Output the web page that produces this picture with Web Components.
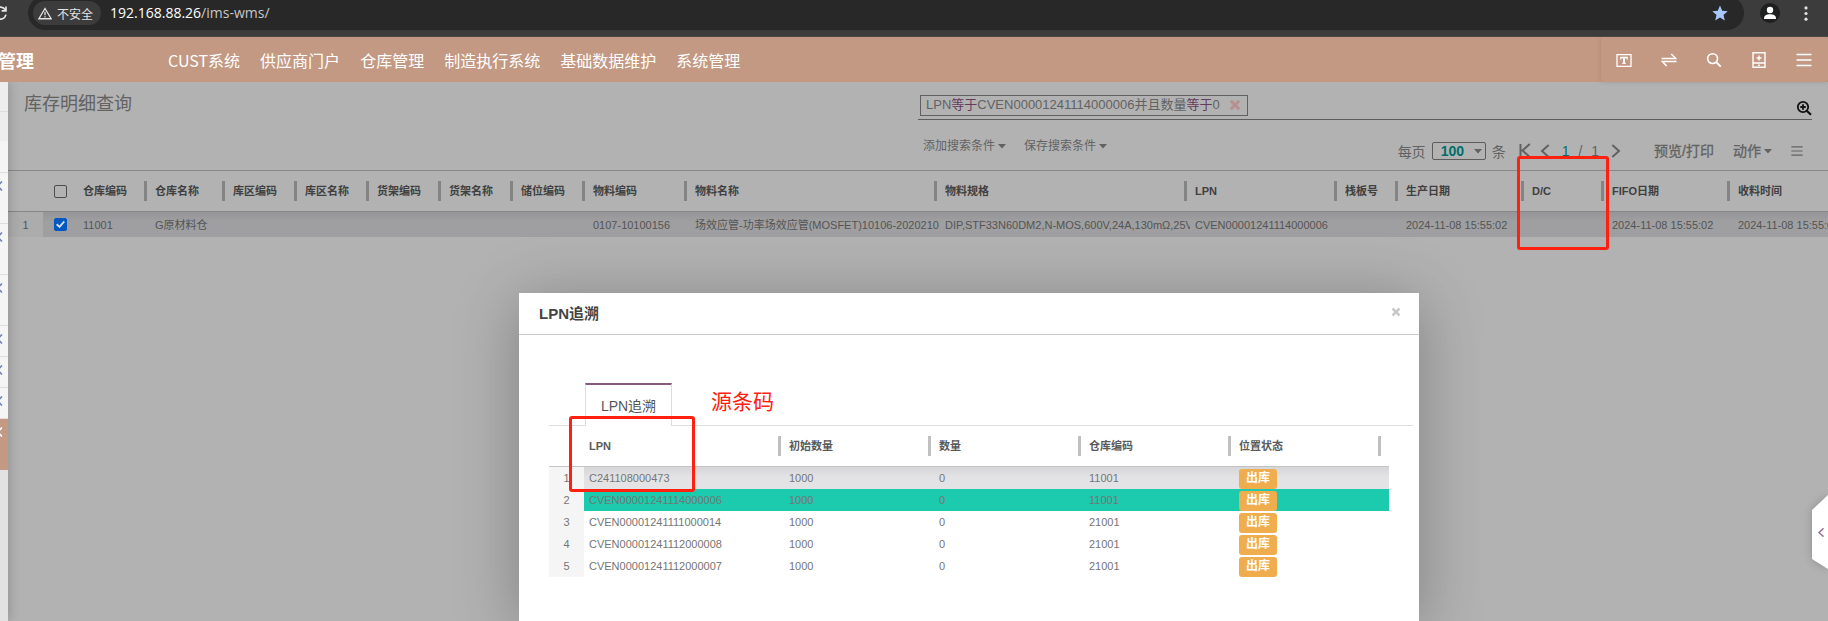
<!DOCTYPE html>
<html lang="zh-CN">
<head>
<meta charset="UTF-8">
<title>库存明细查询</title>
<style>
  body { margin: 0; height: 100vh; overflow: hidden; display: flex; flex-direction: column; background: #b2b2b2; color: #5c5c5c; font-family: "Liberation Sans", "Noto Sans CJK SC", sans-serif; font-size: 14px; }
  main { position: relative; flex: 1; min-height: 0; display: flex; }
  .page { flex: 1; min-width: 0; overflow: hidden; }
</style>
</head>
<body>
  <browser-bar></browser-bar>
  <app-header></app-header>
  <main>
    <side-menu></side-menu>
    <div class="page">
      <control-panel>库存明细查询</control-panel>
      <data-list id="stock" label="库存明细" dim></data-list>
    </div>
    <trace-dialog></trace-dialog>
    <side-handle></side-handle>
  </main>
  <mark-box style="--x:1517px;--y:156px;--w:92px;--h:94px"></mark-box>
  <mark-box style="--x:569px;--y:416px;--w:126px;--h:76px"></mark-box>
  <mark-text style="--x:711px;--y:390px">源条码</mark-text>

<script>
  // Iconos compartidos: [viewBox, contenido]
  const ICONS = {
    reload: ['0 0 16 16', '<path d="M13.4 5.2A6 6 0 1 0 14 9.600M14 1.500v4.300H9.600" fill="none" stroke="currentColor" stroke-width="1.700"/>'],
    warning: ['0 0 16 14', '<path d="M8 1.300 15 13H1z" fill="none" stroke="currentColor" stroke-width="1.500"/><path d="M8 5v4M8 10.200v1.500" stroke="currentColor" stroke-width="1.500"/>'],
    star: ['0 0 16 16', '<path d="M8 .6 10.200 5.700 15.700 6.200 11.500 9.900 12.800 15.400 8 12.500 3.200 15.400 4.500 9.900.3 6.200 5.800 5.700z" fill="currentColor"/>'],
    user: ['0 0 20 20', '<circle cx="10" cy="10" r="10" fill="#1e1f1f"/><circle cx="10" cy="7" r="3.200" fill="#fff"/><path d="M4 15.500c0-3 2.500-4.200 6-4.200s6 1.200 6 4.200V16H4z" fill="#fff"/>'],
    dots: ['0 0 4 16', '<circle cx="2" cy="2" r="1.700" fill="currentColor"/><circle cx="2" cy="8" r="1.700" fill="currentColor"/><circle cx="2" cy="14" r="1.700" fill="currentColor"/>'],
    textbox: ['0 0 16 16', '<path d="M1 2.700h14v11.600H1z" fill="none" stroke="currentColor" stroke-width="1.300"/><path d="M4.800 7.400V5.500h6.400v1.900M6.300 11.400h3.400" fill="none" stroke="currentColor" stroke-width="1.300"/><path d="M8 5.400v6" stroke="currentColor" stroke-width="2"/>'],
    swap: ['0 0 16 16', '<path d="M.5 6.500h14.300L10.300 2M15.500 9.500H1.200L5.700 14" fill="none" stroke="currentColor" stroke-width="1.500"/>'],
    search: ['0 0 16 16', '<circle cx="6.600" cy="6.600" r="4.900" fill="none" stroke="currentColor" stroke-width="1.600"/><path d="m10.200 10.200 4.500 4.500" stroke="currentColor" stroke-width="1.900"/>'],
    device: ['0 0 16 16', '<path d="M2 .7h12v14.600H2zM2 11h12M8 3.500v5M5.500 6h5M7.200 13.200h1.600" fill="none" stroke="currentColor" stroke-width="1.400"/>'],
    menu: ['0 0 16 16', '<path d="M.5 2.500h15M.5 8h15M.5 13.500h15" stroke="currentColor" stroke-width="1.500"/>'],
    zoomIn: ['0 0 16 16', '<circle cx="7" cy="7" r="5.200" fill="none" stroke="currentColor" stroke-width="1.800"/><path d="m10.700 10.700 4.300 4" stroke="currentColor" stroke-width="2.200"/><path d="M7 4.300v5.400M4.300 7h5.400" stroke="currentColor" stroke-width="1.800"/>'],
    first: ['0 0 14 16', '<path d="M2.500 1v13M11.800 1 4.500 7.500l7.300 6.500" fill="none" stroke="currentColor" stroke-width="2"/>'],
    prev: ['0 0 10 16', '<path d="M8.700 2 2 8l6.700 6" fill="none" stroke="currentColor" stroke-width="2"/>'],
    next: ['0 0 10 16', '<path d="M1.300 2 8 8l-6.700 6" fill="none" stroke="currentColor" stroke-width="2"/>'],
    cross: ['0 0 12 12', '<path d="m1.800 1.800 8.400 8.400M10.200 1.800l-8.400 8.400" stroke="currentColor" stroke-width="3"/>'],
    caret: ['0 0 8 5', '<path d="M0 0h8L4 4.500z" fill="currentColor"/>'],
    fold: ['6 0 8 12', '<path d="M8 1.500 3.500 6 8 10.500" fill="none" stroke="currentColor" stroke-width="1.600"/>']
  };

  class UiIcon extends HTMLElement {
    connectedCallback() {
      const [box, body] = ICONS[this.getAttribute('name')];
      this.attachShadow({ mode: 'open' }).innerHTML = `
        <style>
          :host { display: inline-flex; flex: none; width: 16px; height: 16px; }
          svg { width: 100%; height: 100%; display: block; }
        </style>
        <svg viewBox="${box}" aria-hidden="true">${body}</svg>`;
    }
  }
  customElements.define('ui-icon', UiIcon);

  // Barra del navegador
  class BrowserBar extends HTMLElement {
    connectedCallback() {
      this.attachShadow({ mode: 'open' }).innerHTML = `
        <style>
          :host { box-sizing: border-box; flex: none; display: flex; height: 37px; overflow: hidden; background: #3c3c3c; border-bottom: 1px solid #4a4846; color: #e3e3e3; }
          button { border: 0; padding: 0; background: none; color: inherit; font: inherit; display: flex; align-items: center; }
          .reload { width: 28px; height: 26px; }
          .reload ui-icon { margin-left: -8px; }
          .box { flex: 1; margin-top: -4px; height: 34px; box-sizing: border-box; padding: 4px 16px 4px 5px; border-radius: 17px; background: #282828; display: flex; align-items: center; gap: 9px; }
          .chip { height: 24px; padding: 0 8px 0 5px; gap: 5px; border-radius: 12px; background: #3c3c3c; font-size: 12px; }
          .chip ui-icon { width: 14px; height: 13px; }
          .url { flex: 1; font: 14px/24px "Open Sans", sans-serif; color: #c7c7c7; }
          .url b { font-weight: 400; color: #fff; }
          .star { color: #a8c7fa; }
          .side { width: 84px; height: 26px; box-sizing: border-box; padding: 0 20px 0 16px; display: flex; align-items: center; justify-content: space-between; }
          .user { width: 20px; height: 20px; }
          .dots { width: 4px; height: 15px; }
        </style>
        <button class="reload" aria-label="重新加载"><ui-icon name="reload"></ui-icon></button>
        <div class="box">
          <button class="chip"><ui-icon name="warning"></ui-icon>不安全</button>
          <div class="url"><b>192.168.88.26</b>/ims-wms/</div>
          <button class="star" aria-label="收藏"><ui-icon name="star"></ui-icon></button>
        </div>
        <div class="side">
          <button aria-label="用户"><ui-icon class="user" name="user"></ui-icon></button>
          <button aria-label="更多"><ui-icon class="dots" name="dots"></ui-icon></button>
        </div>`;
    }
  }
  customElements.define('browser-bar', BrowserBar);

  class AppHeader extends HTMLElement {
    connectedCallback() {
      const menus = ['CUST系统', '供应商门户', '仓库管理', '制造执行系统', '基础数据维护', '系统管理'];
      const tools = [['textbox', '文本'], ['swap', '切换'], ['search', '搜索'], ['device', '设备'], ['menu', '菜单']];
      this.attachShadow({ mode: 'open' }).innerHTML = `
        <style>
          :host { position: relative; z-index: 2; flex: none; display: flex; align-items: center; height: 45px; background: #c39983; color: #fff; font-family: "Noto Sans CJK SC", sans-serif; }
          .brand { width: 170px; margin-left: -2px; font-size: 18px; font-weight: 700; line-height: 24px; }
          nav { flex: 1; display: flex; gap: 20px; }
          a { color: inherit; text-decoration: none; font-size: 16px; line-height: 24px; white-space: nowrap; }
          .tools { display: flex; height: 45px; padding-right: 2px; border-radius: 4px; box-shadow: 0 0 5px rgba(0,0,0,.12); clip-path: inset(0 0 -6px -6px); }
          button { width: 45px; border: 0; padding: 0; background: none; color: inherit; display: flex; align-items: center; justify-content: center; }
        </style>
        <div class="brand">管理</div>
        <nav>${menus.map(m => `<a href="#">${m}</a>`).join('')}</nav>
        <div class="tools">${tools.map(([i, t]) => `<button aria-label="${t}"><ui-icon name="${i}"></ui-icon></button>`).join('')}</div>`;
    }
  }
  customElements.define('app-header', AppHeader);

  // Menú lateral plegado: solo asoma el borde derecho
  class SideMenu extends HTMLElement {
    connectedCallback() {
      const items = ['flat', 'flat end', 'plain', 'tall', 'tall', 'tall', '', '', '', 'tall active'];
      this.attachShadow({ mode: 'open' }).innerHTML = `
        <style>
          :host { position: relative; z-index: 1; flex: none; display: block; width: 8px; background: #e2e2e2; box-shadow: 0 0 12px rgba(0,0,0,.25); }
          a { box-sizing: border-box; display: block; height: 31px; padding-top: 7px; border-bottom: 1px solid #dedede; background: #f6f5f6; color: #7186b5; overflow: hidden; }
          .flat { height: 30px; background: #ededed; }
          .end { border-color: #f6f5f6; }
          .tall { height: 51px; }
          .active { background: #c39983; border-color: #c39983; color: #fff; }
          ui-icon { display: block; width: 8px; height: 12px; margin-left: -4px; }
        </style>
        ${items.map((c, i) => `<a href="#" class="${c}" aria-label="菜单 ${i + 1}">${i > 2 ? '<ui-icon name="fold"></ui-icon>' : ''}</a>`).join('')}`;
    }
  }
  // el icono plegado se dibuja entero y queda recortado por el borde
  ICONS.fold[0] = '2 0 8 12';
  customElements.define('side-menu', SideMenu);

  class ControlPanel extends HTMLElement {
    connectedCallback() {
      this.attachShadow({ mode: 'open' }).innerHTML = `
        <style>
          :host { box-sizing: border-box; display: flex; justify-content: space-between; height: 89px; padding: 9px 16px 0; border-bottom: 1px solid #888; color: #626262; }
          h1 { margin: 0; font-size: 18px; font-weight: 400; line-height: 26px; }
          .right { width: 894px; }
          .search { display: flex; justify-content: space-between; align-items: center; height: 28px; border-bottom: 1px solid #5c5c5c; padding-left: 2px; }
          .facet { display: flex; align-items: center; height: 19px; padding: 0 6px 0 5px; border: 1px solid #606060; font-size: 13px; line-height: 18px; white-space: nowrap; gap: 9px; }
          .facet em { font-style: normal; color: #663a5b; }
          .facet button { color: #b79090; }
          .facet ui-icon { width: 12px; height: 12px; }
          .zoom { color: #111; align-self: flex-end; padding-bottom: 3px; }
          button { border: 0; padding: 0; background: none; color: inherit; font: inherit; line-height: 20px; display: flex; align-items: center; gap: 3px; white-space: nowrap; }
          .row { display: flex; justify-content: space-between; padding: 16px 9px 0 5px; }
          .filters { display: flex; align-items: flex-start; gap: 18px; font-size: 12px; }
          .caret { width: 8px; height: 5px; }
          .pager { display: flex; align-items: center; height: 24px; padding-top: 3px; }
          label { display: flex; align-items: center; gap: 6px; }
          .pick { display: flex; align-items: center; width: 54px; height: 18px; box-sizing: border-box; border: 1px solid #5c5c5c; border-radius: 2px; padding-right: 3px; }
          select { appearance: none; flex: 1; min-width: 0; height: 16px; border: 0; padding: 0 0 0 8px; background: none; color: #006e6a; font: bold 14px "Liberation Sans", sans-serif; }
          .steps { display: flex; align-items: center; gap: 8px; margin: 0 33px 0 12px; }
          .steps ui-icon { width: 10px; }
          .steps .first { width: 14px; }
          .page { display: flex; gap: 9px; padding: 0 4px; }
          .page b { font-weight: 400; color: #006e6a; }
          .acts { display: flex; align-items: center; gap: 19px; }
          .acts button { -webkit-text-stroke: 0.3px; }
          .list { width: 12px; height: 14px; }
        </style>
        <h1><slot></slot></h1>
        <div class="right">
          <div class="search">
            <div class="facet">
              <span>LPN<em>等于</em>CVEN00001241114000006并且数量<em>等于</em>0</span>
              <button aria-label="移除"><ui-icon name="cross"></ui-icon></button>
            </div>
            <button class="zoom" aria-label="高级搜索"><ui-icon name="zoomIn"></ui-icon></button>
          </div>
          <div class="row">
            <div class="filters">
              <button>添加搜索条件<ui-icon class="caret" name="caret"></ui-icon></button>
              <button>保存搜索条件<ui-icon class="caret" name="caret"></ui-icon></button>
            </div>
            <div class="pager">
              <label>每页
                <span class="pick"><select><option>100</option></select><ui-icon class="caret" name="caret"></ui-icon></span>
              条</label>
              <div class="steps">
                <button aria-label="首页"><ui-icon class="first" name="first"></ui-icon></button>
                <button aria-label="上一页"><ui-icon name="prev"></ui-icon></button>
                <span class="page"><b>1</b><span>/</span><span>1</span></span>
                <button aria-label="下一页"><ui-icon name="next"></ui-icon></button>
              </div>
              <div class="acts">
                <button>预览/打印</button>
                <button>动作<ui-icon class="caret" name="caret"></ui-icon></button>
                <button aria-label="列表"><ui-icon class="list" name="menu"></ui-icon></button>
              </div>
            </div>
          </div>
        </div>`;
    }
  }
  customElements.define('control-panel', ControlPanel);

  class StatusBadge extends HTMLElement {
    connectedCallback() {
      this.attachShadow({ mode: 'open' }).innerHTML = `
        <style>
          :host { display: block; width: max-content; height: 20px; margin-top: 2px; padding: 0 7px; border-radius: 3px; background: #f0ad4e; color: #fff; font-size: 12px; font-weight: 700; line-height: 18px; box-sizing: border-box; }
        </style><slot></slot>`;
    }
  }
  customElements.define('status-badge', StatusBadge);

  // Tabla genérica con separadores de columna
  class DataList extends HTMLElement {
    connectedCallback() {
      this._shadow = this.attachShadow({ mode: 'open' });
    }

    mostrar(columnas, filas, opciones = {}) {
      const check = opciones.check;
      const celda = v => `<td>${v}</td>`;
      this._shadow.innerHTML = `
        <style>
          :host { display: block; overflow: hidden; --linea: #c4c4c4; --sep: #c0c0c0; --num: #f5f5f5; --fila: #e3e3e5; --alto: 22px; --cabecera: #5a5a5a; color: #757575; }
          :host([dim]) { --linea: #868686; --sep: #848484; --num: #acacac; --fila: #9f9fa1; --alto: 25px; --cabecera: #404040; color: #545454; }
          table { table-layout: fixed; width: 0; border-collapse: separate; border-spacing: 0; font-size: 11px; line-height: 16px; }
          th { position: relative; height: 40px; padding: 0 5px; border-bottom: 1px solid var(--linea); box-sizing: content-box; text-align: left; white-space: nowrap; color: var(--cabecera); }
          th.sep::after { content: ""; position: absolute; right: 3px; top: 10px; width: 3px; height: 20px; background: var(--sep); }
          td { height: var(--alto); padding: 0 0 0 5px; white-space: nowrap; overflow: hidden; }
          td.num { padding: 0; text-align: center; background: var(--num); }
          tr.sel td:not(.num) { background: linear-gradient(rgba(0,0,0,.06), transparent 10px) var(--fila); }
          tr.hit td:not(.num) { background: #1ccaae; }
          .chk { padding: 0; text-align: center; }
          input { appearance: none; position: relative; display: block; width: 13px; height: 13px; margin: 0 auto 0 11px; box-sizing: border-box; border: 1px solid #4c4c4c; border-radius: 2px; }
          input:checked { border-color: #0058c0; background: #0058c0; }
          input:checked::after { content: ""; position: absolute; left: 1px; top: 1px; width: 9px; height: 9px; background: #d4dce8; clip-path: polygon(0 55%, 15% 40%, 38% 62%, 85% 8%, 100% 22%, 40% 92%); }
        </style>
        <table aria-label="${this.getAttribute('label')}">
          <colgroup>
            <col style="width:35px">${check ? '<col style="width:35px">' : ''}
            ${columnas.map(c => `<col style="width:${c[1]}px">`).join('')}
            <col style="width:5px">
          </colgroup>
          <thead><tr>
            <th></th>${check ? '<th class="chk"><input type="checkbox" aria-label="全选"></th>' : ''}
            ${columnas.map(c => `<th class="sep">${c[0]}</th>`).join('')}
            <th></th>
          </tr></thead>
          <tbody>
            ${filas.map((f, i) => `<tr class="${f.clase || ''}"><td class="num">${i + 1}</td>
              ${check ? '<td class="chk"><input type="checkbox" aria-label="选择" checked></td>' : ''}
              ${f.datos.map(celda).join('')}<td></td></tr>`).join('')}
          </tbody>
        </table>`;
    }
  }
  customElements.define('data-list', DataList);

  class TraceDialog extends HTMLElement {
    connectedCallback() {
      this._shadow = this.attachShadow({ mode: 'open' });
      this._shadow.innerHTML = `
        <style>
          :host { position: absolute; inset: 0; box-sizing: border-box; padding: 211px 0 0 110px; display: flex; justify-content: center; overflow: hidden; }
          dialog { position: static; margin: 0; padding: 0; border: 0; width: 900px; height: auto; background: #fff; color: #555; box-shadow: 0 8px 60px rgba(0,0,0,.28); }
          header { display: flex; justify-content: space-between; align-items: center; height: 41px; padding: 0 18px 0 20px; border-bottom: 1px solid #ccc; }
          h2 { margin: 0; font-size: 15px; line-height: 20px; color: #444; }
          button { border: 0; padding: 0; background: none; font: inherit; color: #c8c8c8; display: flex; }
          header button { margin-bottom: 4px; }
          header ui-icon { width: 10px; height: 10px; }
          .tabs { display: flex; margin: 48px 6px 0 30px; padding-left: 36px; border-bottom: 1px solid #ddd; }
          .tabs button { box-sizing: border-box; width: 87px; height: 43px; margin-bottom: -1px; border: 1px solid #ddd; border-top: 2px solid #875a7b; border-bottom: 0; background: #fff; color: #555; font-size: 14px; line-height: 20px; align-items: center; justify-content: center; }
          data-list { margin-left: 30px; }
        </style>
        <dialog open aria-labelledby="titulo">
          <header>
            <h2 id="titulo">LPN追溯</h2>
            <button id="cerrar" aria-label="关闭"><ui-icon name="cross"></ui-icon></button>
          </header>
          <div class="tabs" role="tablist"><button role="tab" aria-selected="true">LPN追溯</button></div>
          <data-list label="LPN追溯"></data-list>
        </dialog>`;

      const badge = '<status-badge>出库</status-badge>';
      this._shadow.querySelector('data-list').mostrar(
        [['LPN', 200], ['初始数量', 150], ['数量', 150], ['仓库编码', 150], ['位置状态', 150]],
        [
          { clase: 'sel', datos: ['C241108000473', '1000', '0', '11001', badge] },
          { clase: 'hit', datos: ['CVEN00001241114000006', '1000', '0', '11001', badge] },
          { datos: ['CVEN00001241111000014', '1000', '0', '21001', badge] },
          { datos: ['CVEN00001241112000008', '1000', '0', '21001', badge] },
          { datos: ['CVEN00001241112000007', '1000', '0', '21001', badge] }
        ]);
      this._shadow.querySelector('#cerrar').addEventListener('click', () => this.remove());
    }
  }
  customElements.define('trace-dialog', TraceDialog);

  // Pestaña del borde derecho
  class SideHandle extends HTMLElement {
    connectedCallback() {
      this.attachShadow({ mode: 'open' }).innerHTML = `
        <style>
          :host { position: absolute; right: 0; top: 413px; width: 16px; height: 74px; filter: drop-shadow(0 0 4px rgba(0,0,0,.2)); }
          button { width: 100%; height: 100%; border: 0; padding: 0 0 0 2px; background: #fff; clip-path: polygon(0 15px, 100% 0, 100% 100%, 0 64px); color: #9b6f91; display: flex; align-items: center; justify-content: center; }
          ui-icon { width: 10px; height: 11px; }
        </style>
        <button aria-label="展开"><ui-icon name="prev"></ui-icon></button>`;
    }
  }
  customElements.define('side-handle', SideHandle);

  class MarkBox extends HTMLElement {
    connectedCallback() {
      this.attachShadow({ mode: 'open' }).innerHTML = `
        <style>
          :host { position: absolute; z-index: 5; left: var(--x); top: var(--y); width: var(--w); height: var(--h); box-sizing: border-box; border: 3px solid #ff2010; border-radius: 3px; pointer-events: none; }
        </style>`;
    }
  }
  customElements.define('mark-box', MarkBox);

  class MarkText extends HTMLElement {
    connectedCallback() {
      this.attachShadow({ mode: 'open' }).innerHTML = `
        <style>
          :host { position: absolute; z-index: 5; left: var(--x); top: var(--y); color: #ff2010; font-size: 21px; line-height: 24px; white-space: nowrap; }
        </style><slot></slot>`;
    }
  }
  customElements.define('mark-text', MarkText);

  const fecha = '2024-11-08 15:55:02';
  document.querySelector('#stock').mostrar(
    [['仓库编码', 72], ['仓库名称', 78], ['库区编码', 72], ['库区名称', 72], ['货架编码', 72], ['货架名称', 72], ['储位编码', 72],
     ['物料编码', 102], ['物料名称', 250], ['物料规格', 250], ['LPN', 150], ['栈板号', 61], ['生产日期', 126], ['D/C', 80], ['FIFO日期', 126], ['收料时间', 126]],
    [{ clase: 'sel', datos: ['11001', 'G原材料仓', '', '', '', '', '', '0107-10100156', '场效应管-功率场效应管(MOSFET)10106-2020210',
       'DIP,STF33N60DM2,N-MOS,600V,24A,130mΩ,25V', 'CVEN00001241114000006', '', fecha, '', fecha, fecha] }],
    { check: true });
</script>
</body>
</html>
